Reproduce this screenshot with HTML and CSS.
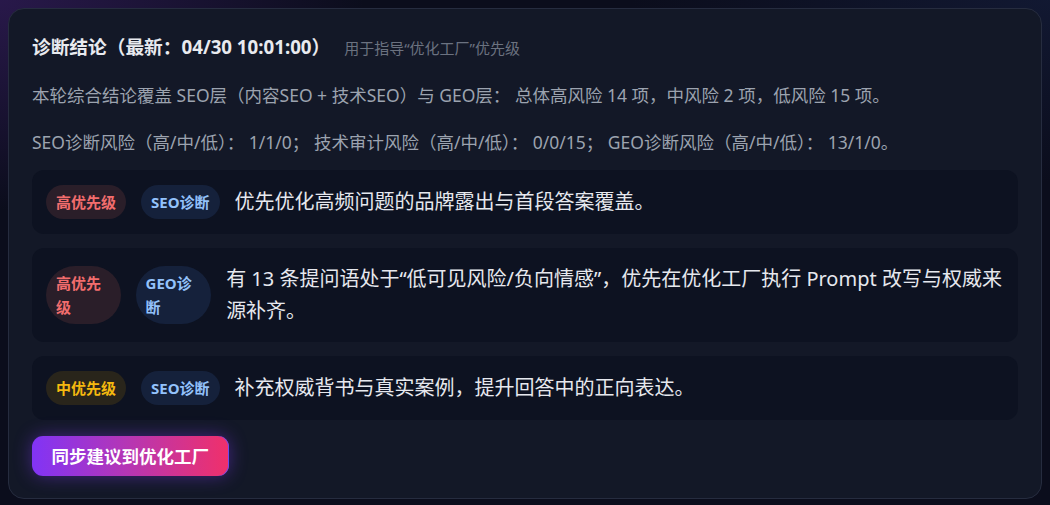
FILE: index.html
```html
<!DOCTYPE html>
<html lang="zh-CN">
<head>
<meta charset="utf-8">
<title>诊断结论</title>
<link rel="stylesheet" href="styles.css">
</head>
<body>
<section class="card">
  <div class="head">
    <h2 class="title">诊断结论（最新：04/30 10:01:00）</h2>
    <span class="sub">用于指导“优化工厂”优先级</span>
  </div>
  <p class="summary">本轮综合结论覆盖 SEO层（内容SEO + 技术SEO）与 GEO层： 总体高风险 14 项，中风险 2 项，低风险 15 项。</p>
  <p class="summary">SEO诊断风险（高/中/低）： 1/1/0； 技术审计风险（高/中/低）： 0/0/15； GEO诊断风险（高/中/低）： 13/1/0。</p>
  <div class="list">
    <div class="item">
      <span class="badge high">高优先级</span>
      <span class="badge src">SEO诊断</span>
      <span class="text">优先优化高频问题的品牌露出与首段答案覆盖。</span>
    </div>
    <div class="item">
      <span class="badge high">高优先级</span>
      <span class="badge src">GEO诊断</span>
      <span class="text">有 13 条提问语处于“低可见风险/负向情感”，优先在优化工厂执行 Prompt 改写与权威来源补齐。</span>
    </div>
    <div class="item">
      <span class="badge mid">中优先级</span>
      <span class="badge src">SEO诊断</span>
      <span class="text">补充权威背书与真实案例，提升回答中的正向表达。</span>
    </div>
  </div>
  <button class="sync" type="button">同步建议到优化工厂</button>
</section>
</body>
</html>
```
FILE: styles.css
```css
* { box-sizing: border-box; }
html, body { height: 100%; }
body {
  margin: 0;
  padding: 8px 8px 6px;
  background:
    radial-gradient(ellipse 520px 300px at 0 0, rgba(76, 38, 130, 0.45), transparent 70%),
    radial-gradient(ellipse 600px 260px at 100% 0, rgba(30, 45, 90, 0.35), transparent 70%),
    #0b0d1c;
  font-family: "Noto Sans", "Noto Sans CJK SC", sans-serif;
  color: #e5e7eb;
}
.card {
  height: 100%;
  background: #131827;
  border: 1px solid #262c3f;
  border-radius: 16px;
  padding: 24px 23px;
  display: flex;
  flex-direction: column;
  align-items: flex-start;
}
.head {
  display: flex;
  align-items: baseline;
  gap: 14px;
  margin-bottom: 20px;
}
.title {
  margin: 0;
  font-size: 18.7px;
  line-height: 28px;
  font-weight: 700;
  color: #e8eaef;
}
.sub {
  font-size: 15px;
  color: #6b7280;
}
.summary {
  margin: 0 0 19px;
  font-size: 17.5px;
  line-height: 28px;
  color: #9ca3af;
}
.summary + .summary { margin-bottom: 14px; }
.list {
  align-self: stretch;
  display: flex;
  flex-direction: column;
  gap: 14px;
}
.item {
  display: flex;
  align-items: center;
  gap: 15px;
  padding: 15px 14px;
  background: #0d1221;
  border-radius: 12px;
}
.badge {
  padding: 5px 10px;
  border-radius: 999px;
  font-size: 15px;
  line-height: 24px;
  font-weight: 700;
}
.high { background: #2a1e29; color: #f26d6d; }
.mid { background: #29251b; color: #f5b90f; }
.src { background: #15213b; color: #93c2fb; }
.text {
  font-size: 20px;
  line-height: 32px;
  color: #e6e8ee;
}
.sync {
  margin-top: 16px;
  padding: 8px 19.5px;
  border: none;
  border-radius: 11px;
  background: linear-gradient(90deg, #8134f6, #b736b2 50%, #f0306a);
  box-shadow: 0 0 18px rgba(124, 58, 237, 0.45), inset -1px 0 0 #6a4cf0;
  font-family: "Noto Sans", "Noto Sans CJK SC", sans-serif;
  font-size: 17.5px;
  line-height: 24px;
  font-weight: 700;
  color: #ffffff;
}
```
